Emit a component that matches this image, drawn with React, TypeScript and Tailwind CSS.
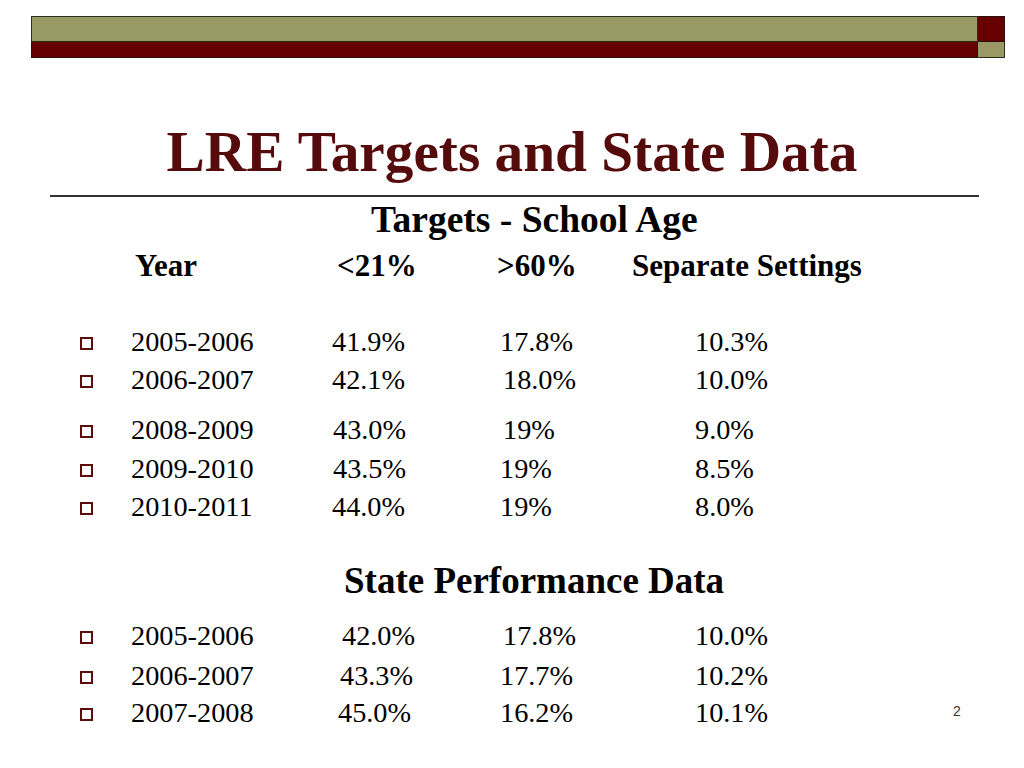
import React from "react";

type Row = {
  year: string;
  a: string;
  b: string;
  c: string;
  mt: string;
  aPad: string;
  bPad: string;
  cPad: string;
};

const targets: Row[] = [
  { year: "2005-2006", a: "41.9%", b: "17.8%", c: "10.3%", mt: "mt-[40px]", aPad: "pl-[0px]", bPad: "pl-[0px]", cPad: "pl-[0px]" },
  { year: "2006-2007", a: "42.1%", b: "18.0%", c: "10.0%", mt: "mt-[2px]", aPad: "pl-[0px]", bPad: "pl-[3px]", cPad: "pl-[0px]" },
  { year: "2008-2009", a: "43.0%", b: "19%", c: "9.0%", mt: "mt-[14px]", aPad: "pl-[1px]", bPad: "pl-[3px]", cPad: "pl-[-2px]" },
  { year: "2009-2010", a: "43.5%", b: "19%", c: "8.5%", mt: "mt-[3px]", aPad: "pl-[1px]", bPad: "pl-[0px]", cPad: "pl-[-2px]" },
  { year: "2010-2011", a: "44.0%", b: "19%", c: "8.0%", mt: "mt-[2px]", aPad: "pl-[0px]", bPad: "pl-[0px]", cPad: "pl-[-2px]" },
];

const state: Row[] = [
  { year: "2005-2006", a: "42.0%", b: "17.8%", c: "10.0%", mt: "mt-[17px]", aPad: "pl-[10px]", bPad: "pl-[3px]", cPad: "pl-[0px]" },
  { year: "2006-2007", a: "43.3%", b: "17.7%", c: "10.2%", mt: "mt-[4px]", aPad: "pl-[8px]", bPad: "pl-[0px]", cPad: "pl-[0px]" },
  { year: "2007-2008", a: "45.0%", b: "16.2%", c: "10.1%", mt: "mt-[1px]", aPad: "pl-[6px]", bPad: "pl-[0px]", cPad: "pl-[0px]" },
];

function DataRow({ r, last }: { r: Row; last?: boolean }) {
  return (
    <div className={`flex items-center h-[36px] leading-[36px] pl-[80px] ${r.mt}`}>
      <span className="w-[51px] flex items-center">
        <span className="block w-[13px] h-[13px] border-2 border-[#5c0c0c] mt-[2px]" />
      </span>
      <span className="w-[201px]">{r.year}</span>
      <span className={`w-[168px] ${r.aPad}`}>{r.a}</span>
      <span className={`w-[195px] ${r.bPad}`}>{r.b}</span>
      <span className={`w-[258px] ${r.cPad}`}>{r.c}</span>
      {last ? (
        <span className="text-[14px] text-[#333] leading-[36px] -mt-[4px]" style={{ fontFamily: '"Liberation Sans", Arial, sans-serif' }}>
          2
        </span>
      ) : null}
    </div>
  );
}

export default function App() {
  return (
    <div
      className="w-[1024px] h-[768px] bg-white text-black overflow-hidden"
      style={{ fontFamily: '"Liberation Serif", "Times New Roman", serif' }}
    >
      <div className="pt-[16px] pl-[31px] flex">
        <div className="flex flex-col w-[947px]">
          <div className="h-[26px] bg-[#999966] border border-[#2e2e20]" />
          <div className="h-[16px] bg-[#660000] border border-t-0 border-[#2a1010]" />
        </div>
        <div className="flex flex-col w-[27px]">
          <div className="h-[26px] bg-[#660000] border border-l-0 border-[#2a1010]" />
          <div className="h-[16px] bg-[#999966] border border-l-0 border-t-0 border-[#2e2e20]" />
        </div>
      </div>

      <div className="mt-[64px] h-[60px] leading-[60px] text-center text-[57.3px] font-bold text-[#550b0b]">
        LRE Targets and State Data
      </div>

      <div className="mt-[13px] ml-[50px] w-[929px] h-[2px] bg-[#333]" />

      <div className="mt-[3px] h-[40px] leading-[40px] text-[37.5px] font-bold pl-[371px]">
        Targets - School Age
      </div>

      <div className="mt-[8px] h-[36px] leading-[36px] text-[31px] font-bold flex pl-[135px]">
        <span className="w-[202px]">Year</span>
        <span className="w-[160px]">&lt;21%</span>
        <span className="w-[135px]">&gt;60%</span>
        <span>Separate Settings</span>
      </div>

      <div className="text-[28.3px]">
        {targets.map((r) => (
          <DataRow key={r.year} r={r} />
        ))}
      </div>

      <div className="mt-[36px] h-[40px] leading-[40px] text-[37px] font-bold pl-[344px]">
        State Performance Data
      </div>

      <div className="text-[28.3px]">
        {state.map((r, i) => (
          <DataRow key={r.year} r={r} last={i === state.length - 1} />
        ))}
      </div>
    </div>
  );
}
